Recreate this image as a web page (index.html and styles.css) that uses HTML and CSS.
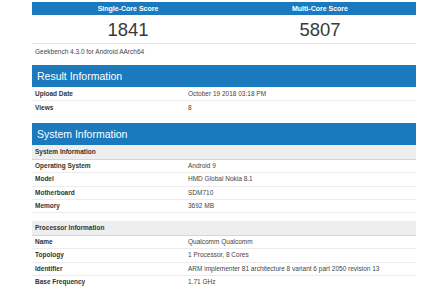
FILE: index.html
```html
<!DOCTYPE html>
<html lang="en">

<head>
    <meta charset="UTF-8">
    <meta name="viewport" content="width=device-width, initial-scale=1.0">
    <title>Geekbench Browser</title>
    <link rel="stylesheet" href="styles.css">
</head>

<body>
    <div id="pagina">
        <!-- pontuacoes -->
        <div class="placar">
            <div class="coluna">
                <div class="placar-titulo">Single-Core Score</div>
                <div class="placar-valor">1841</div>
            </div>
            <div class="coluna">
                <div class="placar-titulo">Multi-Core Score</div>
                <div class="placar-valor">5807</div>
            </div>
        </div>
        <div class="versao">Geekbench 4.3.0 for Android AArch64</div>

        <div class="secao resultado">
            <div class="secao-titulo">Result Information</div>
            <div class="linha"><span class="rotulo">Upload Date</span><span class="valor">October 19 2018 03:18 PM</span></div>
            <div class="linha"><span class="rotulo">Views</span><span class="valor">8</span></div>
        </div>

        <div class="secao">
            <div class="secao-titulo">System Information</div>
            <div class="subtitulo">System Information</div>
            <div class="linha"><span class="rotulo">Operating System</span><span class="valor">Android 9</span></div>
            <div class="linha"><span class="rotulo">Model</span><span class="valor">HMD Global Nokia 8.1</span></div>
            <div class="linha"><span class="rotulo">Motherboard</span><span class="valor">SDM710</span></div>
            <div class="linha"><span class="rotulo">Memory</span><span class="valor">3692 MB</span></div>
            <div class="espaco"></div>
            <div class="subtitulo">Processor Information</div>
            <div class="linha"><span class="rotulo">Name</span><span class="valor">Qualcomm Qualcomm</span></div>
            <div class="linha"><span class="rotulo">Topology</span><span class="valor">1 Processor, 8 Cores</span></div>
            <div class="linha"><span class="rotulo">Identifier</span><span class="valor">ARM implementer 81 architecture 8 variant 6 part 2050 revision 13</span></div>
            <div class="linha"><span class="rotulo">Base Frequency</span><span class="valor">1.71 GHz</span></div>
        </div>
    </div>
</body>

</html>
```

FILE: styles.css
```css
body {
    margin: 0;
    background-color: #fff;
    font-family: "Liberation Sans", Arial, sans-serif;
    color: #333;
}

#pagina {
    width: 384px;
    margin-left: 32px;
    padding-top: 2px;
}

.placar {
    display: flex;
    border-bottom: 1px solid #e6e6e6;
}

.coluna {
    flex: 1;
}

.placar-titulo {
    background-color: #1a7abd;
    color: white;
    font-size: 7px;
    font-weight: bold;
    text-align: center;
    height: 13px;
    line-height: 13px;
}

.placar-valor {
    height: 28px;
    line-height: 30px;
    font-size: 18.5px;
    text-align: center;
    color: #3a3a3a;
}

.versao {
    font-size: 6.5px;
    padding: 4px 3px;
    color: #444;
    height: 7px;
    line-height: 7px;
}

.secao {
    margin-top: 6px;
    margin-bottom: 9px;
}

.secao-titulo {
    background-color: #1a7abd;
    color: white;
    font-size: 10.5px;
    height: 22px;
    line-height: 22px;
    padding-left: 5px;
}

.subtitulo {
    background-color: #eeeeee;
    border-bottom: 1px solid #d6d6d6;
    font-size: 6.5px;
    font-weight: bold;
    height: 14px;
    line-height: 14px;
    padding-left: 3px;
}

.linha {
    display: flex;
    height: 12.3px;
    line-height: 12.3px;
    font-size: 6.5px;
    border-bottom: 1px solid #ececec;
}

.resultado .linha {
    height: 13px;
    line-height: 13px;
}

.linha:last-child {
    border-bottom: none;
}

.rotulo {
    width: 153px;
    padding-left: 3px;
    font-weight: bold;
}

.valor {
    color: #444;
}

.espaco {
    height: 8px;
}
```
